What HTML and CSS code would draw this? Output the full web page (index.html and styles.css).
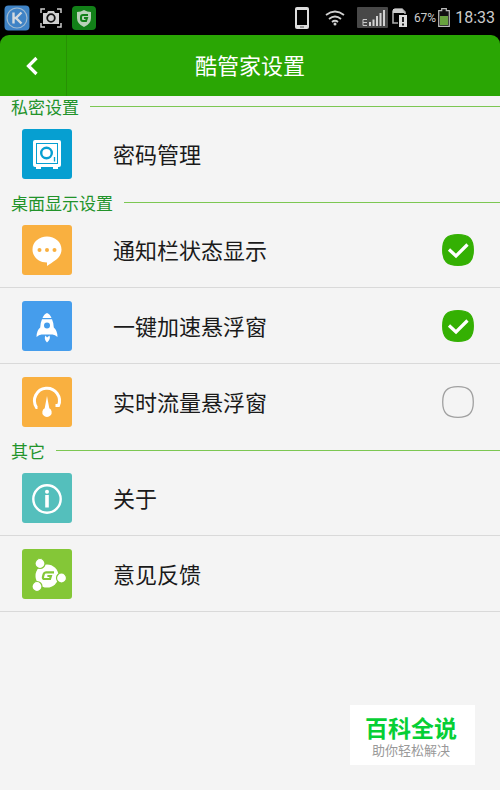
FILE: index.html
```html
<!DOCTYPE html>
<html lang="zh-CN">
<head>
<meta charset="utf-8">
<meta name="viewport" content="width=device-width, initial-scale=1">
<title>酷管家设置</title>
<link rel="stylesheet" href="styles.css">
</head>
<body>
<div class="top">
  <div class="status">
    <div class="status-left">
      <svg width="26" height="26" viewBox="0 0 26 26" aria-hidden="true"><rect x="0.5" y="0.5" width="25" height="25" rx="4" fill="#3f83c6"/><circle cx="13" cy="13" r="10" fill="none" stroke="#9fb9d0" stroke-width="1.2"/><path d="M9.500 7.500v11M17.500 7.500L12 13l5.500 5.500M10 13h2" fill="none" stroke="#d3dae0" stroke-width="2.4"/></svg>
      <svg width="22" height="20" viewBox="0 0 22 20" aria-hidden="true"><path d="M1 5V1h4M17 1h4v4M1 15v4h4M17 19h4v-4" fill="none" stroke="#ccc" stroke-width="1.5"/><path d="M3 5h4l1-2h6l1 2h4v11H3z" fill="#d0d0d0"/><circle cx="11" cy="10" r="3.8" fill="#d0d0d0" stroke="#111" stroke-width="1.8"/></svg>
      <svg width="24" height="24" viewBox="0 0 24 24" aria-hidden="true"><rect width="24" height="24" rx="4" fill="#128018"/><path d="M12 4q3 2 7 2v6q0 6-7 9-7-3-7-9V6q4 0 7-2z" fill="#b9d2b9"/><path d="M16 9h-5q-2 0-2 2v2q0 2 2 2h3l1-3h-3" fill="none" stroke="#128018" stroke-width="2"/></svg>
    </div>
    <div class="status-right">
      <svg width="14" height="22" viewBox="0 0 14 22" aria-hidden="true"><rect width="14" height="22" rx="2" fill="#ddd"/><rect x="2" y="3" width="10" height="15" fill="#000"/><path d="M5 20h4" stroke="#555"/></svg>
      <svg class="wifi" width="20" height="16" viewBox="0 0 20 16" aria-hidden="true"><g fill="none" stroke="#d0d0d0" stroke-width="1.8"><path d="M1 5q9-7 18 0M4 9q6-5 12 0M7 12q3-2.500 6 0"/></g><circle cx="10" cy="14" r="1.5" fill="#d0d0d0"/></svg>
      <svg class="signal" width="31" height="21" viewBox="0 0 31 21" aria-hidden="true"><rect width="31" height="21" rx="1" fill="#484848"/><path d="M10 12.500H6v6h4M6 15.500h4" fill="none" stroke="#c8c8c8"/><path d="M12 15h2v4h-2zM15.500 12.500h2V19h-2zM19 9h2v10h-2zM22.500 6h2v13h-2zM26 3h2v16h-2z" fill="#d2d2d2"/></svg>
      <svg class="sim" width="16" height="19" viewBox="0 0 16 19" aria-hidden="true"><path d="M6 15H1V3l2-2h7l3 3v2" fill="none" stroke="#aaa" stroke-width="1.600"/><path d="M1 1h9l3 4H1z" fill="#ccc"/><rect x="7" y="7" width="8" height="12" fill="#ddd"/><path d="M11 9v5M11 15.500v2" stroke="#222" stroke-width="2"/></svg>
      <span class="percent">67%</span>
      <svg class="battery" width="12" height="19" viewBox="0 0 12 19" aria-hidden="true"><path d="M3.700 2.700V.7h4.600v2h3v15.600H.7V2.700z" fill="#111" stroke="#bbb" stroke-width="1.200"/><path d="M2 8h8v9H2z" fill="#68a23e"/></svg>
      <span class="clock">18:33</span>
    </div>
  </div>
  <header class="bar">
    <button class="back" type="button" aria-label="返回"><svg width="12" height="20" viewBox="0 0 12 20" aria-hidden="true"><path d="M10.500 2L2.500 10l8 8" fill="none" stroke="#fff" stroke-width="3.200"/></svg></button>
    <h1>酷管家设置</h1>
  </header>
</div>

<main>
  <section>
    <h2>私密设置</h2>
    <a class="row" href="#password">
      <svg class="icon" viewBox="0 0 50 50" aria-hidden="true"><rect width="50" height="50" rx="3" fill="#069fd1"/><path d="M13 11h24q2 0 2 2v23q0 2-2 2h-1v2h-5v-2H19v2h-5v-2h-1q-2 0-2-2V13q0-2 2-2z" fill="#fff"/><rect x="14.500" y="14.500" width="21" height="20" fill="none" stroke="#069fd1"/><circle cx="24.500" cy="24" r="5.300" fill="none" stroke="#069fd1" stroke-width="2.400"/><path d="M32.500 28v4.500" stroke="#069fd1" stroke-width="1.300"/></svg>
      <span>密码管理</span>
    </a>
  </section>

  <section>
    <h2>桌面显示设置</h2>
    <label class="row">
      <svg class="icon" viewBox="0 0 50 50" aria-hidden="true"><rect width="50" height="50" rx="3" fill="#f9b040"/><path d="M25 11.500c8 0 14.500 5.500 14.500 13 0 5-3 8.500-6.500 11-2.500 1.800-5 3.500-8 5.500v-3.500c-8 0-14.500-5.500-14.500-13s6.500-13 14.500-13z" fill="#fff"/><g fill="#f9b040"><circle cx="17.500" cy="25" r="2"/><circle cx="25" cy="25" r="2"/><circle cx="32.500" cy="25" r="2"/></g></svg>
      <span>通知栏状态显示</span>
      <input type="checkbox" checked>
      <svg class="tick" viewBox="0 0 32 32" aria-hidden="true"><path class="shape" d="M16 .7c11 0 15.300 4.300 15.300 15.300S27 31.300 16 31.300.7 27 .7 16 5 .7 16 .7z"/><path class="mark" d="M7 15.500l7 6.500L25.500 10.500"/></svg>
    </label>
    <label class="row">
      <svg class="icon" viewBox="0 0 50 50" aria-hidden="true"><rect width="50" height="50" rx="3" fill="#459dec"/><path d="M20.500 17Q22 13 25 12q3 1 4.500 5zM20 18.200h10q1.800 4 1.800 8.300 3.700 3 3.700 9.500-2.500-2.500-5-2.500h-11q-2.500 0-5 2.500 0-6.500 3.700-9.500 0-4.300 1.800-8.300zM23.500 34.500q-2 3.500 1.500 7 4-3.500 2.500-7l-2.500 2z" fill="#fff"/><circle cx="25" cy="24.500" r="3" fill="#459dec"/></svg>
      <span>一键加速悬浮窗</span>
      <input type="checkbox" checked>
      <svg class="tick" viewBox="0 0 32 32" aria-hidden="true"><path class="shape" d="M16 .7c11 0 15.300 4.300 15.300 15.300S27 31.300 16 31.300.7 27 .7 16 5 .7 16 .7z"/><path class="mark" d="M7 15.500l7 6.500L25.500 10.500"/></svg>
    </label>
    <label class="row">
      <svg class="icon" viewBox="0 0 50 50" aria-hidden="true"><rect width="50" height="50" rx="3" fill="#f9b040"/><path d="M15.500 30.500h-1A12.500 12.500 0 1 1 36.500 28.500h-3" fill="none" stroke="#fff" stroke-width="3"/><path d="M25 19l2.300 12.200a4.700 4.700 0 1 1-4.600 0z" fill="#fff"/></svg>
      <span>实时流量悬浮窗</span>
      <input type="checkbox">
      <svg class="tick" viewBox="0 0 32 32" aria-hidden="true"><path class="shape" d="M16 .7c11 0 15.300 4.300 15.300 15.300S27 31.300 16 31.300.7 27 .7 16 5 .7 16 .7z"/><path class="mark" d="M7 15.500l7 6.500L25.500 10.500"/></svg>
    </label>
  </section>

  <section class="last">
    <h2>其它</h2>
    <a class="row" href="#about">
      <svg class="icon" viewBox="0 0 50 50" aria-hidden="true"><rect width="50" height="50" rx="3" fill="#54bfbc"/><circle cx="25" cy="26" r="13.700" fill="none" stroke="#fff" stroke-width="2.400"/><circle cx="25" cy="18.700" r="2" fill="#fff"/><path d="M25 22v12.500" stroke="#fff" stroke-width="3.600"/></svg>
      <span>关于</span>
    </a>
    <a class="row" href="#feedback">
      <svg class="icon" viewBox="0 0 50 50" aria-hidden="true"><rect width="50" height="50" rx="3" fill="#84c737"/><circle cx="25" cy="27" r="11.500" fill="#fff"/><g fill="#fff" stroke="#84c737" stroke-width="1.200"><circle cx="18" cy="14.500" r="5"/><circle cx="39.500" cy="29" r="5"/><circle cx="15" cy="37.500" r="5"/></g><path d="M32 23.300h-8q-1.800 0-2.300 1.800l-.8 3q-.4 1.900 1.600 1.900h5.500l.9-3h-3.500" fill="none" stroke="#84c737" stroke-width="2.200"/></svg>
      <span>意见反馈</span>
    </a>
  </section>
</main>

<aside class="brand">
  <strong>百科全说</strong>
  <span>助你轻松解决</span>
</aside>
</body>
</html>
```
FILE: styles.css
```css
* {
  box-sizing: border-box;
}

body {
  margin: 0;
  min-height: 100vh;
  background: #f4f4f4;
  color: #1a1a1a;
  font-family: Roboto, "Noto Sans CJK SC", sans-serif;
}

svg {
  display: block;
  flex: none;
}

.top {
  background: #000;
}

.status {
  display: flex;
  justify-content: space-between;
  align-items: center;
  height: 35px;
  padding: 0 5px 0 4px;
  color: #ccc;
}

.status-left,
.status-right {
  display: flex;
  align-items: center;
}

.status-left {
  gap: 10px;
}

.wifi {
  margin-left: 16px;
}

.signal {
  margin-left: 12px;
}

.sim {
  margin-left: 4px;
}

.percent {
  margin-left: 6px;
  font-size: 12px;
}

.battery {
  margin: 0 5px 0 2px;
}

.clock {
  font-size: 16px;
}

.bar {
  display: grid;
  grid-template-columns: 67px 1fr 67px;
  align-items: center;
  height: 61px;
  background: #2aa604;
  border-radius: 9px 9px 0 0;
  color: #fff;
}

.back {
  display: flex;
  align-items: center;
  justify-content: center;
  height: 61px;
  padding: 0 3px 0 0;
  border: 0;
  border-right: 1px solid #279104;
  background: none;
}

h1 {
  margin: 0;
  padding-top: 2px;
  font-size: 22px;
  font-weight: 400;
  line-height: 32px;
  text-align: center;
}

/* Section caption followed by a rule that fills the line */
h2 {
  display: flex;
  align-items: flex-start;
  gap: 11px;
  height: 20px;
  margin: 0;
  padding-left: 11px;
  color: #22932a;
  font-size: 17px;
  font-weight: 400;
  line-height: 24px;
}

h2::after {
  content: "";
  flex: 1;
  height: 1px;
  margin-top: 10px;
  background: #7cc752;
}

.row {
  position: relative;
  display: flex;
  align-items: center;
  height: 76px;
  padding: 0 26px 0 22px;
  color: inherit;
  font-size: 22px;
  text-decoration: none;
}

.row:not(:last-child),
.last .row {
  border-bottom: 1px solid #d9d9d9;
}

.row span {
  flex: 1;
  margin-left: 41px;
  padding-bottom: 2px;
}

.icon {
  width: 50px;
  height: 50px;
}

.row input {
  position: absolute;
  right: 26px;
  width: 32px;
  height: 32px;
  margin: 0;
  opacity: 0;
}

.tick {
  width: 32px;
  height: 32px;
}

.shape {
  fill: none;
  stroke: #a0a0a0;
  stroke-width: 1.3;
}

.mark {
  display: none;
  fill: none;
  stroke: #fff;
  stroke-width: 3.2;
}

input:checked + .tick .shape {
  fill: #34b003;
  stroke: #34b003;
}

input:checked + .tick .mark {
  display: block;
}

.brand {
  position: fixed;
  right: 25px;
  bottom: 25px;
  display: flex;
  flex-direction: column;
  align-items: center;
  padding: 12px 18px 6px 15px;
  background: #fff;
}

.brand strong {
  color: #06cf35;
  font-size: 23px;
  font-weight: 700;
  line-height: 26px;
}

.brand span {
  color: #999;
  font-size: 13px;
  line-height: 16px;
}
```
